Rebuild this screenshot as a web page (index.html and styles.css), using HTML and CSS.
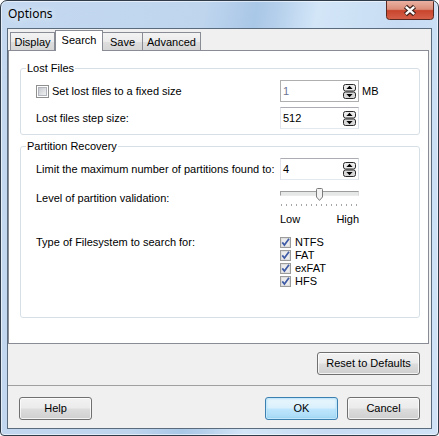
FILE: index.html
```html
<!DOCTYPE html>
<html>
<head>
<meta charset="utf-8">
<title>Options</title>
<link rel="stylesheet" href="styles.css">
</head>
<body>
<div class="window">
  <div class="titlebar">
    <span class="title">Options</span>
    <span class="close">
      <svg width="48" height="19" viewBox="0 0 48 19">
        <defs>
          <linearGradient id="cg" x1="0" y1="0" x2="0" y2="1">
            <stop offset="0" stop-color="#eab0a2"/>
            <stop offset="0.45" stop-color="#db8d79"/>
            <stop offset="0.52" stop-color="#c9452d"/>
            <stop offset="1" stop-color="#d6614a"/>
          </linearGradient>
        </defs>
        <path d="M0.5 0 V15.5 A3 3 0 0 0 3.5 18.5 H44.5 A3 3 0 0 0 47.5 15.5 V0" fill="url(#cg)" stroke="#5a2a22"/>
        <path d="M19.5 5.5 L28.5 13.5 M28.5 5.5 L19.5 13.5" stroke="#3b1f1a" stroke-width="4.6"/>
        <path d="M19.8 5.8 L28.2 13.2 M28.2 5.8 L19.8 13.2" stroke="#ffffff" stroke-width="2.4"/>
      </svg>
    </span>
  </div>
  <div class="client">
    <div class="tabs">
      <div class="tab t-display">Display</div>
      <div class="tab active t-search">Search</div>
      <div class="tab t-save">Save</div>
      <div class="tab t-adv">Advanced</div>
    </div>
    <div class="panel">
      <fieldset class="group g-lost">
        <legend>Lost Files</legend>
        <div class="gbody">
          <div class="row">
            <label class="lbl chk">
              <svg class="cb13" width="13" height="13" viewBox="0 0 13 13">
                <defs>
                  <linearGradient id="cbg" x1="0" y1="0" x2="1" y2="1">
                    <stop offset="0" stop-color="#c3c7cd"/>
                    <stop offset="1" stop-color="#f4f4f4"/>
                  </linearGradient>
                </defs>
                <rect x="0.5" y="0.5" width="12" height="12" fill="#fff" stroke="#8e8f8f"/>
                <rect x="2.5" y="2.5" width="8" height="8" fill="url(#cbg)" stroke="#b2b6bc"/>
              </svg>
              Set lost files to a fixed size
            </label>
            <div class="spin disabled">
              <span class="val">1</span>
              <svg class="spin-ico" width="13" height="15" viewBox="0 0 13 15">
                <rect x="0.5" y="0.5" width="12" height="6.5" rx="2" fill="#eaeaea" stroke="#2a2a2a"/>
                <rect x="0.5" y="8" width="12" height="6.5" rx="2" fill="#d9d9d9" stroke="#2a2a2a"/>
                <path d="M6.5 1.8 L9.6 5 H3.4 Z" fill="#000"/>
                <path d="M6.5 13.3 L9.6 10 H3.4 Z" fill="#000"/>
              </svg>
            </div>
            <span class="unit">MB</span>
          </div>
          <div class="row">
            <span class="lbl">Lost files step size:</span>
            <div class="spin">
              <span class="val">512</span>
              <svg class="spin-ico" width="13" height="15" viewBox="0 0 13 15">
                <rect x="0.5" y="0.5" width="12" height="6.5" rx="2" fill="#eaeaea" stroke="#2a2a2a"/>
                <rect x="0.5" y="8" width="12" height="6.5" rx="2" fill="#d9d9d9" stroke="#2a2a2a"/>
                <path d="M6.5 1.8 L9.6 5 H3.4 Z" fill="#000"/>
                <path d="M6.5 13.3 L9.6 10 H3.4 Z" fill="#000"/>
              </svg>
            </div>
          </div>
        </div>
      </fieldset>

      <fieldset class="group g-part">
        <legend>Partition Recovery</legend>
        <div class="gbody">
          <div class="row">
            <span class="lbl">Limit the maximum number of partitions found to:</span>
            <div class="spin">
              <span class="val">4</span>
              <svg class="spin-ico" width="13" height="15" viewBox="0 0 13 15">
                <rect x="0.5" y="0.5" width="12" height="6.5" rx="2" fill="#eaeaea" stroke="#2a2a2a"/>
                <rect x="0.5" y="8" width="12" height="6.5" rx="2" fill="#d9d9d9" stroke="#2a2a2a"/>
                <path d="M6.5 1.8 L9.6 5 H3.4 Z" fill="#000"/>
                <path d="M6.5 13.3 L9.6 10 H3.4 Z" fill="#000"/>
              </svg>
            </div>
          </div>
          <div class="row row-slider">
            <span class="lbl lbl-slider">Level of partition validation:</span>
            <div class="slider">
              <div class="track-wrap">
                <div class="track"></div>
                <svg class="thumb" width="7" height="13" viewBox="0 0 7 13">
                  <path d="M0.5 1.5 Q0.5 0.5 1.5 0.5 H5.5 Q6.5 0.5 6.5 1.5 V9 L3.5 12.4 L0.5 9 Z" fill="#f2f2f2" stroke="#7b7b7b"/>
                </svg>
              </div>
              <div class="ticks"></div>
              <div class="lowhigh"><span>Low</span><span>High</span></div>
            </div>
          </div>
          <div class="row row-fs">
            <span class="lbl">Type of Filesystem to search for:</span>
            <div class="fs-list">
              <div class="fs-item"><svg class="cb11" width="11" height="11" viewBox="0 0 11 11"><rect x="0.5" y="0.5" width="10" height="10" fill="#dedede" stroke="#9c9c9c"/><rect x="2" y="2" width="7" height="7" fill="#ececec"/><path d="M2.3 5.4 L4.4 8 L9 1.8" fill="none" stroke="#3f5ba6" stroke-width="1.7"/></svg>NTFS</div>
              <div class="fs-item"><svg class="cb11" width="11" height="11" viewBox="0 0 11 11"><rect x="0.5" y="0.5" width="10" height="10" fill="#dedede" stroke="#9c9c9c"/><rect x="2" y="2" width="7" height="7" fill="#ececec"/><path d="M2.3 5.4 L4.4 8 L9 1.8" fill="none" stroke="#3f5ba6" stroke-width="1.7"/></svg>FAT</div>
              <div class="fs-item"><svg class="cb11" width="11" height="11" viewBox="0 0 11 11"><rect x="0.5" y="0.5" width="10" height="10" fill="#dedede" stroke="#9c9c9c"/><rect x="2" y="2" width="7" height="7" fill="#ececec"/><path d="M2.3 5.4 L4.4 8 L9 1.8" fill="none" stroke="#3f5ba6" stroke-width="1.7"/></svg>exFAT</div>
              <div class="fs-item"><svg class="cb11" width="11" height="11" viewBox="0 0 11 11"><rect x="0.5" y="0.5" width="10" height="10" fill="#dedede" stroke="#9c9c9c"/><rect x="2" y="2" width="7" height="7" fill="#ececec"/><path d="M2.3 5.4 L4.4 8 L9 1.8" fill="none" stroke="#3f5ba6" stroke-width="1.7"/></svg>HFS</div>
            </div>
          </div>
        </div>
      </fieldset>
    </div>

    <div class="reset-bar">
      <button class="btn btn-reset">Reset to Defaults</button>
    </div>
    <div class="sep"></div>
    <div class="button-bar">
      <button class="btn">Help</button>
      <span class="grow"></span>
      <button class="btn btn-ok">OK</button>
      <button class="btn">Cancel</button>
    </div>
  </div>
</div>
</body>
</html>
```

FILE: styles.css
```css
html, body {
  margin: 0;
  padding: 0;
  background: #ffffff;
}

body {
  font-family: "Liberation Sans", Arial, sans-serif;
  font-size: 11px;
  line-height: 13px;
  color: #000;
}

.window {
  width: 439px;
  height: 436px;
  box-sizing: border-box;
  border: 1px solid #303c4a;
  border-radius: 7px 7px 4px 4px;
  background: linear-gradient(100deg, #c4d9f0 0%, #bfd5ee 40%, #a9c7e7 50%, #b4cfeb 54%, #d3e6f8 62%, #c7dcf3 78%, #d0e3f7 100%);
  box-shadow: inset 0 0 0 1px rgba(255, 255, 255, 0.55);
  display: flex;
  flex-direction: column;
  overflow: hidden;
}

.titlebar {
  height: 27px;
  flex: none;
  display: flex;
  justify-content: space-between;
  align-items: flex-start;
}

.title {
  margin: 5px 0 0 7px;
  font-family: "Noto Sans", "Open Sans", sans-serif;
  font-size: 12px;
  line-height: 16px;
  color: #000;
  text-shadow: 0 0 6px rgba(255, 255, 255, 0.9);
}

.close {
  display: block;
  width: 48px;
  height: 19px;
  margin-right: 4px;
}

.close svg {
  display: block;
}

.client {
  flex: 1;
  margin: 0 6px 6px;
  background: #f0f0f0;
  border: 1px solid #5b6b7e;
  display: flex;
  flex-direction: column;
  min-height: 0;
}

/* Tabs */
.tabs {
  height: 21px;
  flex: none;
  display: flex;
  align-items: flex-end;
  padding-left: 2px;
}

.tab {
  box-sizing: border-box;
  height: 18px;
  padding-top: 3px;
  text-align: center;
  border: 1px solid #898c95;
  border-bottom: none;
  background: linear-gradient(#f3f3f3, #ebebeb 50%, #dedede 51%, #d6d6d6);
}

.tab.active {
  height: 21px;
  padding-top: 3px;
  margin-bottom: -1px;
  background: #fff;
  position: relative;
  z-index: 2;
}

.t-display { width: 45px; }
.t-search { width: 48px; }
.t-save { width: 40px; border-left: none; }
.t-adv { width: 58px; border-left: none; }

/* Panel */
.panel {
  box-sizing: border-box;
  height: 294px;
  flex: none;
  margin-right: 2px;
  border: 1px solid #898c95;
  background: #fff;
  padding-top: 11px;
}

.group {
  margin: 0 8px 0 11px;
  padding: 5px 8px 5px 5px;
  border: 1px solid #d5dfe5;
  border-radius: 3px;
  min-inline-size: 0;
}

.group legend {
  padding: 0 1px;
  line-height: 13px;
}

.g-part {
  margin-top: 5px;
  padding-bottom: 29px;
}

.gbody {
  padding-left: 10px;
}

.row {
  display: flex;
  align-items: center;
  height: 22px;
}

.row + .row {
  margin-top: 5px;
}

.lbl {
  width: 244px;
  flex: none;
}

.chk {
  display: flex;
  align-items: center;
}

.cb13 {
  display: block;
  margin-right: 3px;
  flex: none;
}

/* Spin edit */
.spin {
  box-sizing: border-box;
  width: 79px;
  height: 22px;
  display: flex;
  align-items: center;
  justify-content: space-between;
  padding: 0 2px 0 2px;
  background: #fff;
  border: 1px solid;
  border-color: #abadb3 #dbdfe6 #e3e9ef #e2e3ea;
}

.spin.disabled {
  border-color: #afafaf;
}

.spin.disabled .val {
  color: #6b7391;
}

.spin-ico {
  display: block;
}

.unit {
  margin-left: 3px;
}

/* Slider */
.row-slider {
  height: auto;
  align-items: flex-start;
}

.lbl-slider {
  margin-top: 7px;
}

.slider {
  width: 79px;
}

.track-wrap {
  position: relative;
  height: 16px;
}

.track {
  box-sizing: border-box;
  position: relative;
  top: 6px;
  height: 5px;
  border: 1px solid;
  border-color: #9d9d9d #d9d9d9 #ececec #9d9d9d;
  background: #e6e8e8;
}

.thumb {
  position: absolute;
  left: 36px;
  top: 3px;
  display: block;
}

.ticks {
  margin: 3px 0 0 1px;
  width: 76px;
  height: 2px;
  background: repeating-linear-gradient(to right, #a6a6a6 0 1px, transparent 1px 5px);
}

.lowhigh {
  margin-top: 7px;
  display: flex;
  justify-content: space-between;
}

/* Filesystem list */
.row-fs {
  height: auto;
  align-items: flex-start;
}

.row-slider + .row-fs {
  margin-top: 10px;
}

.fs-list {
  display: flex;
  flex-direction: column;
}

.fs-item {
  height: 13px;
  display: flex;
  align-items: center;
}

.cb11 {
  display: block;
  margin-right: 4px;
}

/* Bottom buttons */
.reset-bar {
  flex: none;
  display: flex;
  justify-content: flex-end;
  padding: 8px 11px 0;
}

.sep {
  flex: none;
  height: 1px;
  margin-top: 10px;
  background: #a0a0a0;
}

.button-bar {
  flex: none;
  display: flex;
  gap: 9px;
  padding: 11px 11px 0;
}

.grow {
  flex: 1;
}

.btn {
  box-sizing: border-box;
  width: 73px;
  height: 23px;
  padding: 0;
  margin: 0;
  font: inherit;
  line-height: 13px;
  color: #000;
  text-align: center;
  border: 1px solid #707070;
  border-radius: 3px;
  background: linear-gradient(#f2f2f2, #ebebeb 48%, #dddddd 52%, #cfcfcf);
  box-shadow: inset 0 0 0 1px rgba(255, 255, 255, 0.75);
}

.btn-reset {
  width: 103px;
}

.btn-ok {
  border-color: #3c7fb1;
  background: linear-gradient(#eaf6fd, #d9f0fc 48%, #bee6fd 52%, #a7d9f5);
  box-shadow: inset 0 0 0 1px #c4e8fa, inset 0 0 2px 1px rgba(72, 185, 236, 0.35);
}
```
